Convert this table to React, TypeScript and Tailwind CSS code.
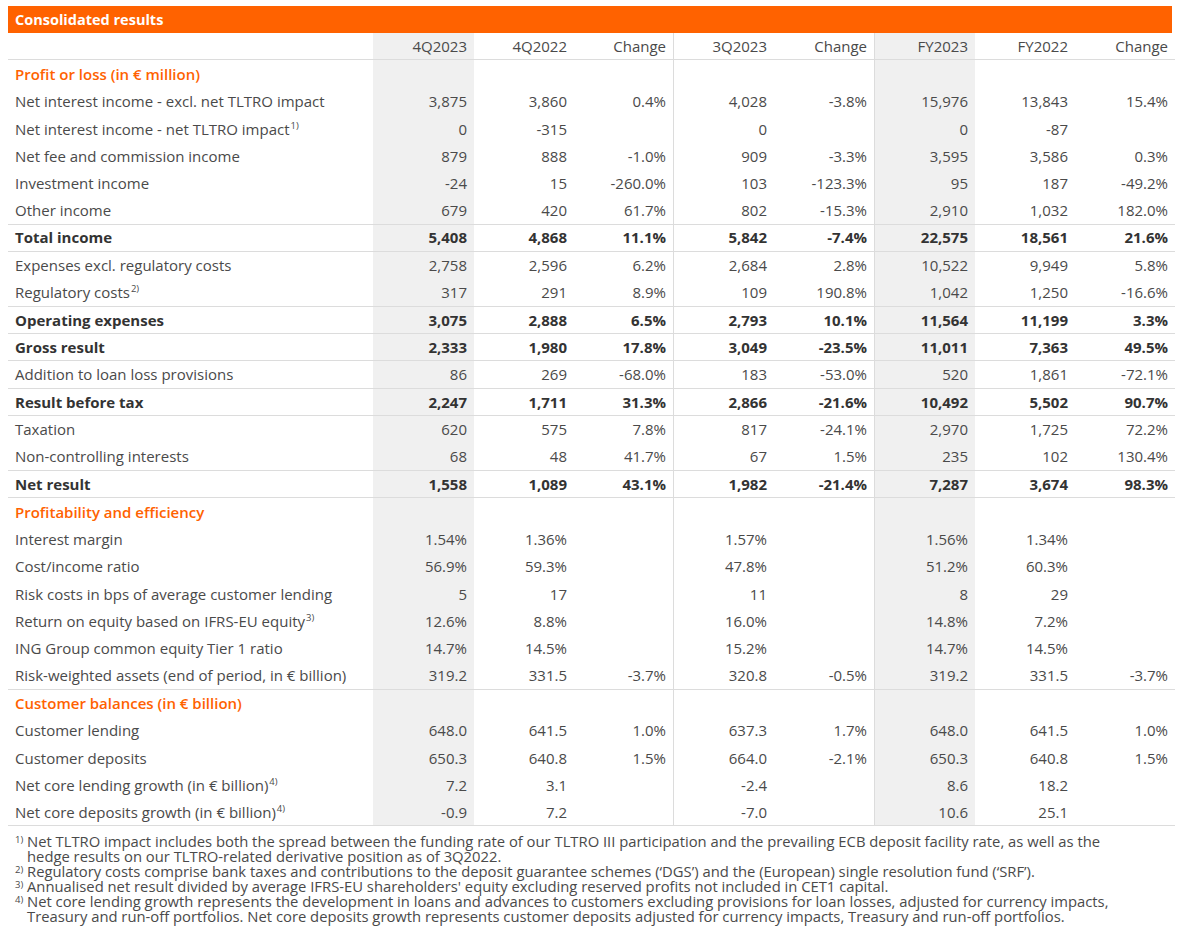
import React from "react";

type Row = {
  label: string;
  note?: string;
  values?: string[];
  kind?: "section" | "bold";
  line?: boolean;
};

const rows: Row[] = [
  { label: "Profit or loss (in € million)", kind: "section" },
  { label: "Net interest income - excl. net TLTRO impact", values: ["3,875", "3,860", "0.4%", "4,028", "-3.8%", "15,976", "13,843", "15.4%"] },
  { label: "Net interest income - net TLTRO impact", note: "1)", values: ["0", "-315", "", "0", "", "0", "-87", ""] },
  { label: "Net fee and commission income", values: ["879", "888", "-1.0%", "909", "-3.3%", "3,595", "3,586", "0.3%"] },
  { label: "Investment income", values: ["-24", "15", "-260.0%", "103", "-123.3%", "95", "187", "-49.2%"] },
  { label: "Other income", values: ["679", "420", "61.7%", "802", "-15.3%", "2,910", "1,032", "182.0%"], line: true },
  { label: "Total income", kind: "bold", values: ["5,408", "4,868", "11.1%", "5,842", "-7.4%", "22,575", "18,561", "21.6%"], line: true },
  { label: "Expenses excl. regulatory costs", values: ["2,758", "2,596", "6.2%", "2,684", "2.8%", "10,522", "9,949", "5.8%"] },
  { label: "Regulatory costs", note: "2)", values: ["317", "291", "8.9%", "109", "190.8%", "1,042", "1,250", "-16.6%"], line: true },
  { label: "Operating expenses", kind: "bold", values: ["3,075", "2,888", "6.5%", "2,793", "10.1%", "11,564", "11,199", "3.3%"], line: true },
  { label: "Gross result", kind: "bold", values: ["2,333", "1,980", "17.8%", "3,049", "-23.5%", "11,011", "7,363", "49.5%"], line: true },
  { label: "Addition to loan loss provisions", values: ["86", "269", "-68.0%", "183", "-53.0%", "520", "1,861", "-72.1%"], line: true },
  { label: "Result before tax", kind: "bold", values: ["2,247", "1,711", "31.3%", "2,866", "-21.6%", "10,492", "5,502", "90.7%"], line: true },
  { label: "Taxation", values: ["620", "575", "7.8%", "817", "-24.1%", "2,970", "1,725", "72.2%"] },
  { label: "Non-controlling interests", values: ["68", "48", "41.7%", "67", "1.5%", "235", "102", "130.4%"], line: true },
  { label: "Net result", kind: "bold", values: ["1,558", "1,089", "43.1%", "1,982", "-21.4%", "7,287", "3,674", "98.3%"], line: true },
  { label: "Profitability and efficiency", kind: "section" },
  { label: "Interest margin", values: ["1.54%", "1.36%", "", "1.57%", "", "1.56%", "1.34%", ""] },
  { label: "Cost/income ratio", values: ["56.9%", "59.3%", "", "47.8%", "", "51.2%", "60.3%", ""] },
  { label: "Risk costs in bps of average customer lending", values: ["5", "17", "", "11", "", "8", "29", ""] },
  { label: "Return on equity based on IFRS-EU equity", note: "3)", values: ["12.6%", "8.8%", "", "16.0%", "", "14.8%", "7.2%", ""] },
  { label: "ING Group common equity Tier 1 ratio", values: ["14.7%", "14.5%", "", "15.2%", "", "14.7%", "14.5%", ""] },
  { label: "Risk-weighted assets (end of period, in € billion)", values: ["319.2", "331.5", "-3.7%", "320.8", "-0.5%", "319.2", "331.5", "-3.7%"], line: true },
  { label: "Customer balances (in € billion)", kind: "section" },
  { label: "Customer lending", values: ["648.0", "641.5", "1.0%", "637.3", "1.7%", "648.0", "641.5", "1.0%"] },
  { label: "Customer deposits", values: ["650.3", "640.8", "1.5%", "664.0", "-2.1%", "650.3", "640.8", "1.5%"] },
  { label: "Net core lending growth (in € billion)", note: "4)", values: ["7.2", "3.1", "", "-2.4", "", "8.6", "18.2", ""] },
  { label: "Net core deposits growth (in € billion)", note: "4)", values: ["-0.9", "7.2", "", "-7.0", "", "10.6", "25.1", ""], line: true },
];

const heads = ["4Q2023", "4Q2022", "Change", "3Q2023", "Change", "FY2023", "FY2022", "Change"];

const grid =
  "grid grid-cols-[365px_101px_100px_99px_101px_100px_101px_100px_100px] h-[27.36px] items-center";

function cellCls(i: number) {
  return [
    "h-full flex items-center justify-end pr-[7px]",
    i === 0 || i === 5 ? "bg-[#f0f0f0]" : "",
    i === 3 || i === 5 ? "border-l border-[#dcdcdc]" : "",
  ].join(" ");
}

function Sup({ t }: { t: string }) {
  return <sup className="text-[9.5px] relative top-[-6px] ml-[1px] leading-none">{t}</sup>;
}

function Note({ n, children }: { n: string; children: React.ReactNode }) {
  return (
    <div className="flex">
      <span className="text-[9.5px] leading-none w-[12px] shrink-0 pt-[1px]">{n}</span>
      <span>{children}</span>
    </div>
  );
}

export default function App() {
  return (
    <div className="bg-white min-h-screen pt-[6px] pl-[8px] text-[#4a4a4a] font-['Open_Sans',sans-serif] text-[15px]">
      <div className="w-[1164px] h-[27px] bg-[#ff6200] flex items-center pl-[7px] text-white font-bold text-[14.5px]">
        Consolidated results
      </div>

      <div className="w-[1167px]">
        <div className={grid + " border-b border-[#dcdcdc]"}>
          <div />
          {heads.map((h, i) => (
            <div key={i} className={cellCls(i)}>
              {h}
            </div>
          ))}
        </div>

        {rows.map((r, ri) => (
          <div key={ri} className={grid + (r.line ? " border-b border-[#dcdcdc]" : "")}>
            <div
              className={
                "pl-[7px] whitespace-nowrap " +
                (r.kind === "section"
                  ? "text-[#ff6200] font-semibold"
                  : r.kind === "bold"
                  ? "font-bold text-[#333]"
                  : "")
              }
            >
              {r.label}
              {r.note && <Sup t={r.note} />}
            </div>
            {Array.from({ length: 8 }).map((_, i) => (
              <div key={i} className={cellCls(i) + (r.kind === "bold" ? " font-bold text-[#333]" : "")}>
                {r.values ? r.values[i] : ""}
              </div>
            ))}
          </div>
        ))}
      </div>

      <div className="pt-[8px] pl-[7px] text-[14.8px] leading-[15px] text-[#4a4a4a]">
        <Note n="1)">
          Net TLTRO impact includes both the spread between the funding rate of our TLTRO III participation and the
          prevailing ECB deposit facility rate, as well as the
          <br />
          hedge results on our TLTRO-related derivative position as of 3Q2022.
        </Note>
        <Note n="2)">
          Regulatory costs comprise bank taxes and contributions to the deposit guarantee schemes (‘DGS’) and the
          (European) single resolution fund (‘SRF’).
        </Note>
        <Note n="3)">
          Annualised net result divided by average IFRS-EU shareholders' equity excluding reserved profits not included
          in CET1 capital.
        </Note>
        <Note n="4)">
          Net core lending growth represents the development in loans and advances to customers excluding provisions for
          loan losses, adjusted for currency impacts,
          <br />
          Treasury and run-off portfolios. Net core deposits growth represents customer deposits adjusted for currency
          impacts, Treasury and run-off portfolios.
        </Note>
      </div>
    </div>
  );
}
